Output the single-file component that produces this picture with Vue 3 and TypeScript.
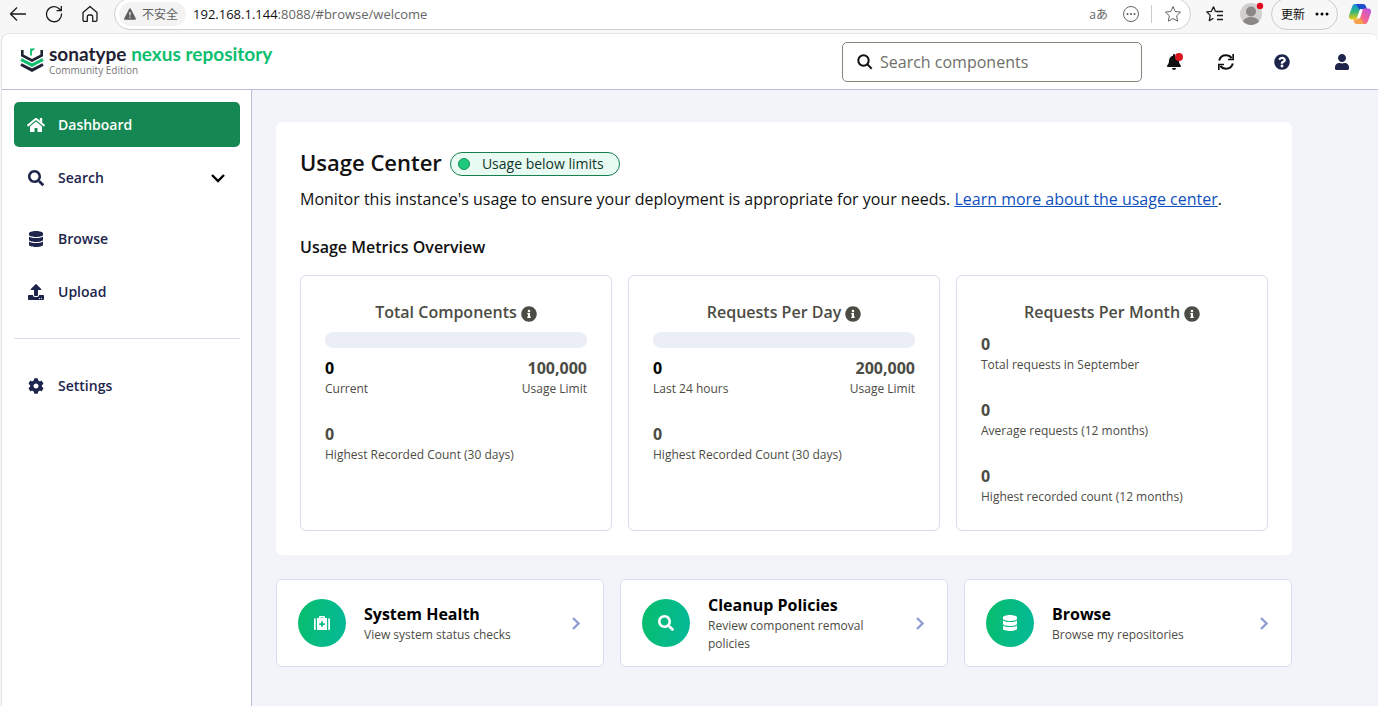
<script setup lang="ts">
interface Shape { w: number; d: string }
interface Stat { value: string; label: string; strong?: boolean }
interface Metric { title: string; bar: boolean; rows: Stat[][] }
interface Shortcut { title: string; text: string; icon: string }

const icons: Record<string, Shape> = {
  home: { w: 576, d: 'M280.37 148.26L96 300.11V464a16 16 0 0 0 16 16l112.06-.29a16 16 0 0 0 15.92-16V368a16 16 0 0 1 16-16h64a16 16 0 0 1 16 16v95.64a16 16 0 0 0 16 16.05L464 480a16 16 0 0 0 16-16V300L295.67 148.26a12.19 12.19 0 0 0-15.3 0zM571.6 251.47L488 182.56V44.05a12 12 0 0 0-12-12h-56a12 12 0 0 0-12 12v72.61L318.47 43a48 48 0 0 0-61 0L4.34 251.47a12 12 0 0 0-1.6 16.9l25.5 31A12 12 0 0 0 45.15 301l235.22-193.74a12.19 12.19 0 0 1 15.3 0L530.9 301a12 12 0 0 0 16.9-1.6l25.5-31a12 12 0 0 0-1.7-16.93z' },
  search: { w: 512, d: 'M505 442.7L405.3 343c-4.5-4.5-10.6-7-17-7H372c27.6-35.3 44-79.7 44-128C416 93.1 322.9 0 208 0S0 93.1 0 208s93.1 208 208 208c48.3 0 92.7-16.4 128-44v16.3c0 6.4 2.5 12.5 7 17l99.7 99.7c9.4 9.4 24.6 9.4 33.9 0l28.3-28.3c9.4-9.4 9.4-24.6.1-34zM208 336c-70.7 0-128-57.2-128-128 0-70.7 57.2-128 128-128 70.7 0 128 57.2 128 128 0 70.7-57.2 128-128 128z' },
  database: { w: 448, d: 'M448 73.143v45.714C448 159.143 347.667 192 224 192S0 159.143 0 118.857V73.143C0 32.857 100.333 0 224 0s224 32.857 224 73.143zM448 176v102.857C448 319.143 347.667 352 224 352S0 319.143 0 278.857V176c48.125 33.143 136.208 48.572 224 48.572S399.874 209.143 448 176zm0 160v102.857C448 479.143 347.667 512 224 512S0 479.143 0 438.857V336c48.125 33.143 136.208 48.572 224 48.572S399.874 369.143 448 336z' },
  upload: { w: 512, d: 'M296 384h-80c-13.3 0-24-10.7-24-24V192h-87.7c-17.8 0-26.7-21.5-14.1-34.1L242.3 5.7c7.5-7.5 19.8-7.5 27.3 0l152.2 152.2c12.6 12.6 3.7 34.1-14.1 34.1H320v168c0 13.3-10.7 24-24 24zm216-8v112c0 13.3-10.7 24-24 24H24c-13.3 0-24-10.7-24-24V376c0-13.3 10.7-24 24-24h136v8c0 30.9 25.1 56 56 56h80c30.9 0 56-25.1 56-56v-8h136c13.3 0 24 10.7 24 24zm-124 88c0-11-9-20-20-20s-20 9-20 20 9 20 20 20 20-9 20-20zm64 0c0-11-9-20-20-20s-20 9-20 20 9 20 20 20 20-9 20-20z' },
  cog: { w: 512, d: 'M487.4 315.7l-42.6-24.6c4.3-23.2 4.3-47 0-70.2l42.6-24.6c4.9-2.8 7.1-8.6 5.5-14-11.1-35.6-30-67.8-54.7-94.6-3.8-4.1-10-5.1-14.8-2.3L380.8 110c-17.9-15.4-38.5-27.3-60.8-35.1V25.8c0-5.6-3.9-10.5-9.4-11.7-36.7-8.2-74.3-7.8-109.2 0-5.5 1.2-9.4 6.1-9.4 11.7V75c-22.2 7.9-42.8 19.8-60.8 35.1L88.7 85.5c-4.9-2.8-11-1.9-14.8 2.3-24.7 26.7-43.6 58.9-54.7 94.6-1.7 5.4.6 11.2 5.5 14L67.3 221c-4.3 23.2-4.3 47 0 70.2l-42.6 24.6c-4.9 2.8-7.1 8.6-5.5 14 11.1 35.6 30 67.8 54.7 94.6 3.8 4.1 10 5.1 14.8 2.3l42.6-24.6c17.9 15.4 38.5 27.3 60.8 35.1v49.2c0 5.6 3.9 10.5 9.4 11.7 36.7 8.2 74.3 7.8 109.2 0 5.5-1.2 9.4-6.1 9.4-11.7v-49.2c22.2-7.9 42.8-19.8 60.8-35.1l42.6 24.6c4.9 2.8 11 1.9 14.8-2.3 24.7-26.7 43.6-58.9 54.7-94.6 1.5-5.5-.7-11.3-5.6-14.1zM256 336c-44.1 0-80-35.9-80-80s35.9-80 80-80 80 35.9 80 80-35.9 80-80 80z' },
  bell: { w: 448, d: 'M224 512c35.32 0 63.97-28.65 63.97-64H160.03c0 35.35 28.65 64 63.97 64zm215.39-149.71c-19.32-20.76-55.47-51.99-55.47-154.29 0-77.7-54.48-139.9-127.94-155.16V32c0-17.67-14.32-32-31.98-32s-31.98 14.33-31.98 32v20.84C118.56 68.1 64.08 130.3 64.08 208c0 102.3-36.15 133.53-55.47 154.29-6 6.45-8.66 14.16-8.61 21.71.11 16.4 12.98 32 32.1 32h383.8c19.12 0 32-15.6 32.1-32 .05-7.55-2.61-15.27-8.61-21.71z' },
  help: { w: 512, d: 'M504 256c0 136.997-111.043 248-248 248S8 392.997 8 256C8 119.083 119.043 8 256 8s248 111.083 248 248zM262.655 90c-54.497 0-89.255 22.957-116.549 63.758-3.536 5.286-2.353 12.415 2.715 16.258l34.699 26.31c5.205 3.947 12.621 3.008 16.665-2.122 17.864-22.658 30.113-35.797 57.303-35.797 20.429 0 45.698 13.148 45.698 32.958 0 14.976-12.363 22.667-32.534 33.976C247.128 238.528 216 254.941 216 296v4c0 6.627 5.373 12 12 12h56c6.627 0 12-5.373 12-12v-1.333c0-28.462 83.186-29.647 83.186-106.667 0-58.002-60.165-102-116.531-102zM256 338c-25.365 0-46 20.635-46 46 0 25.364 20.635 46 46 46s46-20.636 46-46c0-25.365-20.635-46-46-46z' },
  info: { w: 512, d: 'M256 8C119.043 8 8 119.083 8 256c0 136.997 111.043 248 248 248s248-111.003 248-248C504 119.083 392.957 8 256 8zm0 110c23.196 0 42 18.804 42 42s-18.804 42-42 42-42-18.804-42-42 18.804-42 42-42zm56 254c0 6.627-5.373 12-12 12h-88c-6.627 0-12-5.373-12-12v-24c0-6.627 5.373-12 12-12h12v-64h-12c-6.627 0-12-5.373-12-12v-24c0-6.627 5.373-12 12-12h64c6.627 0 12 5.373 12 12v100h12c6.627 0 12 5.373 12 12v24z' },
  user: { w: 448, d: 'M224 256c70.7 0 128-57.3 128-128S294.7 0 224 0 96 57.3 96 128s57.3 128 128 128zm89.6 32h-16.7c-22.2 10.2-46.9 16-72.9 16s-50.6-5.8-72.9-16h-16.7C60.2 288 0 348.2 0 422.4V464c0 26.5 21.5 48 48 48h352c26.5 0 48-21.5 48-48v-41.6c0-74.2-60.2-134.4-134.4-134.4z' },
  medkit: { w: 512, d: 'M0 144c0-22 14-40 32-44h24v380H32c-18-4-32-22-32-44zM512 144c0-22-14-40-32-44h-24v380h24c18-4 32-22 32-44zM96 96h64V72c0-22 18-40 40-40h112c22 0 40 18 40 40v24h64v384H96zM208 80v16h96V80zM228 200v60h-60v56h60v60h56v-60h60v-56h-60v-60z' },
}

const metrics: Metric[] = [
  {
    title: 'Total Components', bar: true,
    rows: [
      [{ value: '0', label: 'Current', strong: true }, { value: '100,000', label: 'Usage Limit' }],
      [{ value: '0', label: 'Highest Recorded Count (30 days)' }],
    ],
  },
  {
    title: 'Requests Per Day', bar: true,
    rows: [
      [{ value: '0', label: 'Last 24 hours', strong: true }, { value: '200,000', label: 'Usage Limit' }],
      [{ value: '0', label: 'Highest Recorded Count (30 days)' }],
    ],
  },
  {
    title: 'Requests Per Month', bar: false,
    rows: [
      [{ value: '0', label: 'Total requests in September' }],
      [{ value: '0', label: 'Average requests (12 months)' }],
      [{ value: '0', label: 'Highest recorded count (12 months)' }],
    ],
  },
]

const shortcuts: Shortcut[] = [
  { title: 'System Health', text: 'View system status checks', icon: 'medkit' },
  { title: 'Cleanup Policies', text: 'Review component removal policies', icon: 'search' },
  { title: 'Browse', text: 'Browse my repositories', icon: 'database' },
]
</script>

<template>
  <div class="window">
    <div class="toolbar">
      <button class="tool" aria-label="Back">
        <svg width="18" height="18" viewBox="0 0 18 18" class="line"><path d="M17 9H1.500M8 2.500 1.500 9 8 15.500" /></svg>
      </button>
      <button class="tool" aria-label="Reload">
        <svg width="18" height="18" viewBox="0 0 18 18" class="line"><path d="M16.500 8.500A7.500 7.500 0 1 1 13.500 3.200L16 5.500M16.300 1v4.700h-4.800" /></svg>
      </button>
      <button class="tool" aria-label="Home">
        <svg width="18" height="18" viewBox="0 0 18 18" class="line"><path d="M2 7.500 9 1.500l7 6V15a1.300 1.300 0 0 1-1.300 1.300h-3V11.500a1.500 1.500 0 0 0-1.500-1.500H7.800a1.500 1.500 0 0 0-1.500 1.500v4.800h-3A1.300 1.300 0 0 1 2 15z" /></svg>
      </button>
      <div class="address">
        <span class="unsafe">
          <svg width="12" height="12" viewBox="0 0 12 12"><path d="M6 .3a.9.900 0 0 1 .8.500l5 9.600a.9.900 0 0 1-.8 1.300H1a.9.900 0 0 1-.8-1.300l5-9.600A.9.900 0 0 1 6 .3z" fill="#5f5f5f" /><path d="M6 4v3.600M6 8.700v1.300" stroke="#f3f3f3" stroke-width="1.200" /></svg>
          不安全
        </span>
        <span class="url"><b>192.168.1.144</b>:8088/#browse/welcome</span>
        <span class="translate">aあ</span>
        <svg class="more" width="18" height="18" viewBox="0 0 18 18"><circle cx="9" cy="9" r="7.500" fill="none" stroke="#666" /><g fill="#555"><circle cx="5.500" cy="9" r="1" /><circle cx="9" cy="9" r="1" /><circle cx="12.500" cy="9" r="1" /></g></svg>
        <span class="split"></span>
        <svg width="18" height="18" viewBox="0 0 18 18" fill="none" stroke="#666"><path d="m9 1.500 2.200 5 5.400.6-4 3.700 1.100 5.400L9 13.500l-4.700 2.700 1.100-5.400-4-3.700 5.400-.6z" stroke-linejoin="round" /></svg>
      </div>
      <button class="tool fav" aria-label="Favorites">
        <svg width="18" height="18" viewBox="0 0 18 18" class="line"><path d="M9.500 6.500 7.500 1.800 5.400 6.300l-4.600.6 3.400 3.500-.9 5.200 4.200-2.300M9.500 6.500H17M11 10.500h6M11 14.500h6" /></svg>
      </button>
      <button class="tool avatar" aria-label="Profile">
        <svg width="24" height="24" viewBox="0 0 24 24"><circle cx="11" cy="13" r="11" fill="#d2d0ce" /><circle cx="11" cy="10.500" r="5" fill="#8a8886" /><path d="M3 20.500c1-3 4-4.500 8-4.500s7 1.500 8 4.500a11 11 0 0 1-16 0z" fill="#8a8886" /><circle cx="20" cy="5" r="3.200" fill="#e00b1c" /></svg>
      </button>
      <button class="update">
        更新
        <svg width="16" height="4" viewBox="0 0 16 4"><circle cx="3" cy="2" r="1.500" /><circle cx="8" cy="2" r="1.500" /><circle cx="13" cy="2" r="1.500" /></svg>
      </button>
      <button class="tool" aria-label="Copilot">
        <svg width="24" height="22" viewBox="0 0 24 22">
          <defs>
            <linearGradient id="cpA" x1="0" y1="0" x2="0" y2="1"><stop offset="0" stop-color="#1595ea" /><stop offset=".5" stop-color="#34b878" /><stop offset="1" stop-color="#f2cb10" /></linearGradient>
            <linearGradient id="cpB" x1="0" y1="1" x2="1" y2="0"><stop offset="0" stop-color="#ff9250" /><stop offset=".5" stop-color="#f0609c" /><stop offset="1" stop-color="#b653e8" /></linearGradient>
          </defs>
          <path d="M7 1h8L10 14c-1 2-2 2.500-4 2.500H4C1 16.500.5 14 1.200 12L4 4c.6-2 1.500-3 3-3z" fill="url(#cpA)" />
          <path d="M8 1h7c2 0 2.500 1 3 2.500L19 6h-3c-2 0-3 .8-3.600 2.500z" fill="#1b4dcc" />
          <path d="M17 21H8l5-13c1-2 2-2.500 4-2.500h3c3 0 3.500 2.500 2.800 4.500L20 18c-.6 2-1.500 3-3 3z" fill="url(#cpB)" />
          <path d="M16 21H9c-2 0-2.500-1-3-2.500l-.7-2H8c2 0 3-.8 3.600-2.500z" fill="#f7a14a" />
          <path d="M13 7.500 10.800 14" stroke="#fff" stroke-width="3" stroke-linecap="round" />
        </svg>
      </button>
    </div>

    <div class="page">
      <header class="header">
        <a class="brand" href="#browse/welcome">
          <svg width="24" height="26" viewBox="0 0 24 26">
            <g fill="none" stroke-width="3">
              <path d="M2.300 3v5.500L12 13.500l9.700-5V3" stroke="#1f2233" stroke-width="2.600" />
              <path d="m1 12.500 11 5.700 11-5.700" stroke="#0bbf6e" />
              <path d="m1 17.500 11 5.700 11-5.700" stroke="#1f2233" />
              <path d="M11 8.500V1.500M11 4.500c.5-1.800 1.700-2.500 3.400-2.300" stroke="#0bbf6e" stroke-width="1.800" />
            </g>
          </svg>
          <span class="names">
            <span class="product">sonatype <em>nexus repository</em></span>
            <span class="edition">Community Edition</span>
          </span>
        </a>
        <label class="finder">
          <svg width="16" height="16" viewBox="0 0 16 16" fill="none" stroke="#111" stroke-width="2"><circle cx="6.500" cy="6.500" r="5.200" /><path d="m10.400 10.400 4.300 4.300" /></svg>
          <input type="text" placeholder="Search components" aria-label="Search components" />
        </label>
        <div class="actions">
          <button aria-label="Notifications" class="bell">
            <svg width="14" height="16" viewBox="0 0 448 512" fill="#111"><path :d="icons.bell.d" /></svg>
            <i class="alert"></i>
          </button>
          <button aria-label="Refresh">
            <svg width="16" height="16" viewBox="0 0 16 16" fill="none" stroke="#111" stroke-width="2"><path d="M1.200 6.500C2 3.500 4.700 1.300 8 1.300c2.400 0 4.300 1 5.600 2.800M14.800 9.500c-.8 3-3.500 5.200-6.800 5.200-2.400 0-4.300-1-5.600-2.800" /><path d="M15.200 0v5.500H10M.8 16v-5.500H6" stroke-width="1.700" /></svg>
          </button>
          <button aria-label="Help">
            <svg width="16" height="16" viewBox="0 0 512 512" fill="#1d254c"><path :d="icons.help.d" /></svg>
          </button>
          <button aria-label="Account">
            <svg width="14" height="16" viewBox="0 0 448 512" fill="#1d254c"><path :d="icons.user.d" /></svg>
          </button>
        </div>
      </header>

      <div class="body">
        <nav class="sidebar">
          <a class="item active" href="#browse/welcome">
            <svg width="18" height="16" viewBox="0 0 576 512"><path :d="icons.home.d" /></svg>Dashboard
          </a>
          <button class="item group" aria-expanded="false">
            <svg width="18" height="16" viewBox="0 0 512 512"><path :d="icons.search.d" /></svg>Search
            <svg class="caret" width="16" height="16" viewBox="0 0 16 16"><path d="m2 5 6 6 6-6" fill="none" stroke="#000" stroke-width="2.400" /></svg>
          </button>
          <a class="item" href="#browse/browse">
            <svg width="18" height="16" viewBox="0 0 448 512"><path :d="icons.database.d" /></svg>Browse
          </a>
          <a class="item" href="#browse/upload">
            <svg width="18" height="16" viewBox="0 0 512 512"><path :d="icons.upload.d" /></svg>Upload
          </a>
          <hr />
          <a class="item" href="#admin">
            <svg width="18" height="16" viewBox="0 0 512 512"><path :d="icons.cog.d" /></svg>Settings
          </a>
        </nav>

        <main class="content">
          <section class="usage">
            <div class="heading">
              <h1>Usage Center</h1>
              <span class="status"><i></i>Usage below limits</span>
            </div>
            <p>Monitor this instance's usage to ensure your deployment is appropriate for your needs. <a href="#usage">Learn more about the usage center</a>.</p>
            <h2>Usage Metrics Overview</h2>
            <div class="metrics">
              <article v-for="m in metrics" :key="m.title" class="metric">
                <h3>{{ m.title }} <svg width="16" height="16" viewBox="0 0 512 512"><path :d="icons.info.d" /></svg></h3>
                <div v-if="m.bar" class="bar" role="progressbar" aria-valuenow="0" :aria-label="m.title"></div>
                <div v-for="(row, r) in m.rows" :key="r" class="row">
                  <div v-for="s in row" :key="s.label" class="stat" :class="{ strong: s.strong }">
                    <b>{{ s.value }}</b>
                    <span>{{ s.label }}</span>
                  </div>
                </div>
              </article>
            </div>
          </section>

          <div class="shortcuts">
            <a v-for="s in shortcuts" :key="s.title" class="shortcut" href="#browse">
              <span class="disc"><svg width="16" height="16" :viewBox="`0 0 ${icons[s.icon].w} 512`"><path :d="icons[s.icon].d" fill-rule="evenodd" /></svg></span>
              <span class="text"><b>{{ s.title }}</b><span>{{ s.text }}</span></span>
              <svg width="16" height="16" viewBox="0 0 16 16" fill="none" stroke="#929cd2" stroke-width="2.400"><path d="m5 3 5.500 5.500L5 14" /></svg>
            </a>
          </div>
        </main>
      </div>
    </div>
  </div>
</template>

<style>
body { margin: 0; }
</style>

<style scoped>
.window {
  box-sizing: border-box;
  min-height: 100vh;
  display: flex;
  flex-direction: column;
  overflow: hidden;
  background: #f7f7f7;
  font-family: "Open Sans", "Noto Sans CJK SC", sans-serif;
  font-size: 16px;
  color: #111;
}
button { border: 0; padding: 0; background: none; font: inherit; color: inherit; }
a { color: inherit; text-decoration: none; }
svg { flex: none; display: block; }

.toolbar { display: flex; align-items: flex-start; height: 33px; padding: 0 6px 0 9px; }
.tool { display: flex; align-items: center; justify-content: center; width: 18px; height: 28px; margin-right: 18px; }
.line { fill: none; stroke: #1b1b1b; stroke-width: 1.3; stroke-linejoin: round; }
.address {
  flex: 1;
  display: flex;
  align-items: center;
  box-sizing: border-box;
  height: 32px;
  margin: -2px 15px 0 -3px;
  padding: 0 8px 0 4px;
  border: 1px solid #d0d0d0;
  border-radius: 16px;
  background: #fff;
  font-size: 13px;
}
.unsafe {
  display: flex;
  align-items: center;
  gap: 6px;
  height: 24px;
  margin-right: 7px;
  padding: 0 8px 0 5px;
  border-radius: 12px;
  background: #f3f3f3;
  font-size: 12px;
  color: #5f5f5f;
}
.url { flex: 1; color: #666; }
.url b { font-weight: 400; color: #111; }
.translate { font-size: 12px; color: #666; }
.more { margin-left: 14px; }
.split { width: 1px; height: 18px; margin: 0 12px 0 11px; background: #ccc; }
.fav { margin-right: 16px; }
.avatar { width: 24px; height: 26px; margin-right: 7px; }
.update {
  display: flex;
  align-items: center;
  gap: 9px;
  box-sizing: border-box;
  height: 32px;
  margin: -2px 10px 0 0;
  padding: 0 7px 0 9px;
  border: 1px solid #ccc;
  border-radius: 16px;
  font-size: 12px;
}
.toolbar .tool:last-child { width: 24px; margin-right: 0; }

.page {
  flex: 1;
  display: flex;
  flex-direction: column;
  margin-left: 1px;
  border-top: 1px solid #e6e6e6;
  border-left: 1px solid #e2e2e2;
  border-radius: 8px 8px 0 0;
  overflow: hidden;
  background: #fff;
}
.header { display: flex; align-items: center; height: 55px; border-bottom: 1px solid #b9bedc; }
.brand { display: flex; align-items: flex-start; gap: 5px; margin: 0 auto 0 18px; padding-bottom: 4px; }
.brand svg { margin-top: 3px; }
.names { display: flex; flex-direction: column; }
.product { font-family: Lato, "Open Sans", sans-serif; font-weight: 700; font-size: 19px; line-height: 20px; color: #1f2233; }
.product em { font-style: normal; color: #0bbf6e; }
.edition { font-size: 10px; line-height: 12px; color: #777; }
.finder {
  display: flex;
  align-items: center;
  gap: 7px;
  box-sizing: border-box;
  width: 300px;
  height: 40px;
  padding: 0 14px;
  border: 1px solid #85857a;
  border-radius: 5px;
}
.finder input { flex: 1; min-width: 0; border: 0; outline: 0; padding: 0; background: none; font: inherit; color: #111; }
.finder input::placeholder { color: #6f6f69; opacity: 1; }
.actions { display: flex; align-items: center; margin: 0 29px 0 25px; }
.actions button { display: flex; margin-left: 44px; }
.actions .bell { position: relative; margin-left: 0; }
.actions .bell + button { margin-left: 37px; margin-right: -4px; }
.actions button:last-child { margin-left: 45px; }
.alert { position: absolute; top: -1px; right: -2px; width: 8px; height: 8px; border-radius: 50%; background: #d9161d; }

.body { flex: 1; display: flex; }
.sidebar {
  box-sizing: border-box;
  width: 250px;
  padding: 12px 11px 0 12px;
  border-right: 1px solid #b9bedc;
}
.item {
  display: flex;
  align-items: center;
  gap: 13px;
  box-sizing: border-box;
  width: 100%;
  height: 45px;
  margin-bottom: 8px;
  padding: 0 14px 0 13px;
  border-radius: 5px;
  font-size: 14px;
  font-weight: 600;
  color: #1d254c;
}
.item svg { fill: currentColor; }
.active { background: #158753; color: #fff; }
.group { margin-bottom: 16px; }
.caret { margin-left: auto; }
hr { height: 1px; margin: 24px 0; border: 0; background: #d9dcf0; }

.content { flex: 1; padding: 32px 24px 24px; background: #f3f4fa; }
.usage { box-sizing: border-box; max-width: 1016px; padding: 24px; border-radius: 6px; background: #fff; }
.heading { display: flex; align-items: center; gap: 8px; height: 36px; }
h1 { margin: 0; padding-bottom: 4px; font-size: 22px; line-height: 32px; font-weight: 600; }
.status {
  display: flex;
  align-items: center;
  gap: 12px;
  box-sizing: border-box;
  height: 24px;
  padding: 0 15px 1px 7px;
  border: 1px solid #17804f;
  border-radius: 12px;
  background: #e8fbf2;
  font-size: 14px;
  color: #10352a;
}
.status i { box-sizing: border-box; width: 12px; height: 12px; border: 1px solid #12955a; border-radius: 50%; background: #1fc87f; }
p { margin: 4px 0 0; line-height: 26px; }
p a { color: #0f4fc0; text-decoration: underline; }
h2 { margin: 22px 0 15px; font-size: 16px; line-height: 26px; font-weight: 600; }
.metrics, .shortcuts { display: grid; grid-template-columns: repeat(3, 1fr); gap: 16px; }
.metric { box-sizing: border-box; min-height: 256px; padding: 24px; border: 1px solid #d9dcf0; border-radius: 6px; color: #4c4c45; }
h3 { display: flex; align-items: center; justify-content: center; gap: 4px; margin: 0 0 7px; font-size: 16px; line-height: 25px; font-weight: 600; }
h3 svg { margin-top: 3px; fill: #4c4c45; }
.bar { height: 16px; margin-bottom: 8px; border-radius: 8px; background: #ebedf7; }
.row { display: flex; justify-content: space-between; margin-bottom: 24px; }
.row:last-child { margin-bottom: 0; }
.stat { display: flex; flex-direction: column; }
.stat + .stat { text-align: right; }
.stat b { font-weight: 700; line-height: 24px; }
.stat span { font-size: 12px; line-height: 18px; }
.strong b { color: #000; }

.shortcuts { max-width: 1016px; margin-top: 24px; }
.shortcut {
  display: flex;
  align-items: center;
  gap: 18px;
  box-sizing: border-box;
  min-height: 88px;
  padding: 8px 19px 8px 21px;
  border: 1px solid #d9dcf0;
  border-radius: 6px;
  background: #fff;
}
.disc {
  flex: none;
  display: flex;
  align-items: center;
  justify-content: center;
  width: 48px;
  height: 48px;
  border-radius: 50%;
  background: linear-gradient(100deg, #06be6c, #05b89a);
}
.disc svg { fill: #fff; }
.text { flex: 1; display: flex; flex-direction: column; padding-right: 16px; }
.text b { font-weight: 700; line-height: 24px; color: #000; }
.text span { font-size: 12px; line-height: 18px; color: #4c4c45; }
</style>
